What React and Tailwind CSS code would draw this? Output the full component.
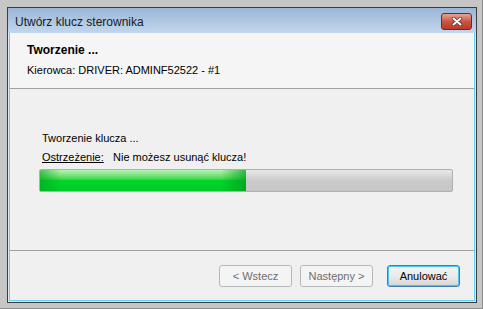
export default function App() {
  return (
    <div
      className="w-[483px] h-[309px] bg-[#c6c6c6] pl-[7px] pt-[7px] pr-[5px] pb-[5px] border-r border-b border-[#8c8c8c] text-black"
      style={{ fontFamily: '"Liberation Sans", Arial, sans-serif' }}
    >
      <div className="w-full h-full flex flex-col border border-[#3c3c3c] bg-[#dbe7f4]">
        {/* title bar */}
        <div className="h-[25px] shrink-0 flex items-center justify-between pl-[7px] pr-[4px] bg-gradient-to-b from-[#9bb7d6] to-[#c2d7ee]">
          <span className="text-[12px] mt-[3px] text-[#1a1a1a]">Utwórz klucz sterownika</span>
          <button className="w-[31px] h-[17px] mt-[2px] rounded-[3px] border border-[#6b2a22] bg-gradient-to-b from-[#e6a497] via-[#c9553f] to-[#b8392a] flex items-center justify-center">
            <svg width="12" height="9" viewBox="0 0 12 9">
              <path d="M2.5 1.5 L9.5 7.5 M9.5 1.5 L2.5 7.5" stroke="#5a2a24" strokeWidth="3.4" strokeLinecap="round" />
              <path d="M2.5 1.5 L9.5 7.5 M9.5 1.5 L2.5 7.5" stroke="#ffffff" strokeWidth="2" strokeLinecap="round" />
            </svg>
          </button>
        </div>

        {/* body */}
        <div className="flex-1 flex flex-col mx-px mb-px border border-t-0 border-[#62d1f4] bg-[#f0f0f0]">
          {/* header */}
          <div className="h-[56px] shrink-0 bg-[#f5f5f5] pl-[17px] pt-[10px] border-b border-[#a0a0a0]">
            <div className="text-[12px] font-bold leading-[14px]">Tworzenie ...</div>
            <div className="text-[11px] leading-[13px] mt-[7px]">Kierowca: DRIVER: ADMINF52522 - #1</div>
          </div>

          {/* content */}
          <div className="flex-1 pl-[32px] pr-[20px] pt-[43px]">
            <div className="text-[11px] leading-[13px]">Tworzenie klucza ...</div>
            <div className="flex text-[11px] leading-[13px] mt-[6px]">
              <span className="underline w-[71px]">Ostrzeżenie:</span>
              <span>Nie możesz usunąć klucza!</span>
            </div>
            <div className="mt-[5px] -ml-[3px] w-[414px] h-[23px] rounded-[2px] border border-[#b0b0b0] bg-gradient-to-b from-[#e8e8e8] via-[#cbcbcb] to-[#c6c6c6] flex overflow-hidden">
              <div className="w-[206px] h-full relative bg-gradient-to-b from-[#b6f2b6] via-[#00d52a] to-[#00cc28]">
                <div className="absolute inset-0 bg-gradient-to-r from-[#00a020]/60 via-transparent via-[10%] to-transparent" />
                <div className="absolute inset-0 bg-gradient-to-l from-[#009a1e]/70 via-transparent via-[12%] to-transparent" />
              </div>
            </div>
          </div>

          {/* footer */}
          <div className="h-[50px] shrink-0 border-t border-[#a0a0a0] flex items-start justify-end pt-[14px] pr-[14px] gap-[8px]">
            <button className="w-[73px] h-[22px] rounded-[3px] border border-[#b4b8bb] bg-[#f4f4f4] text-[11px] text-[#6d6d6d]">&lt; Wstecz</button>
            <button className="w-[73px] h-[22px] rounded-[3px] border border-[#b4b8bb] bg-[#f4f4f4] text-[11px] text-[#6d6d6d] mr-[6px]">Następny &gt;</button>
            <button className="w-[73px] h-[22px] rounded-[3px] border border-[#3c7fb1] bg-gradient-to-b from-[#f2f2f2] via-[#ebebeb] to-[#d6d6d6] text-[11px] text-black shadow-[inset_0_0_0_1px_#48c7f0]">Anulować</button>
          </div>
        </div>
      </div>
    </div>
  );
}
